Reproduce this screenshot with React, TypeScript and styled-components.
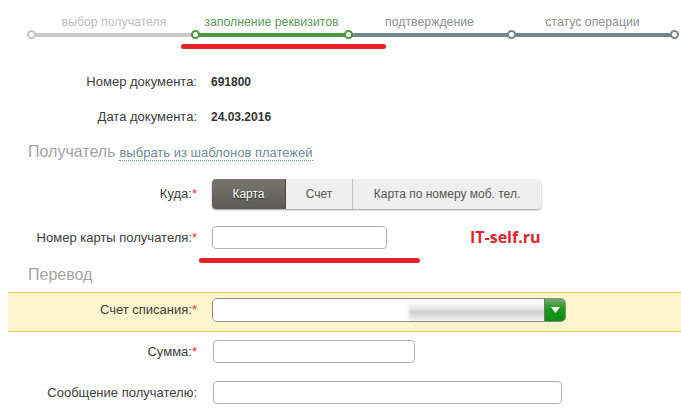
import React from "react";
import styled, { createGlobalStyle } from "styled-components";

const Global = createGlobalStyle`
  html, body { margin: 0; padding: 0; background: #fff; }
  body { font-family: "Liberation Sans", Arial, sans-serif; color: #333; overflow: hidden; }
`;

const Page = styled.div`
  position: relative;
  width: 681px;
  height: 410px;
  overflow: hidden;
`;

const Stepper = styled.div`
  display: flex;
  padding: 15px 0 0 27px;
  height: 56px;
  box-sizing: border-box;
`;

const Step = styled.div<{ $w: number; $labelColor: string; $line: string; $node: string }>`
  position: relative;
  width: ${p => p.$w}px;
  height: 41px;
  text-align: center;
  font-size: 12.3px;
  line-height: 14px;
  color: ${p => p.$labelColor};
  &::before {
    content: "";
    position: absolute;
    left: 4px;
    right: -4px;
    top: 18px;
    height: 4px;
    background: ${p => p.$line};
  }
  &::after {
    content: "";
    position: absolute;
    left: 0;
    top: 15px;
    width: 5px;
    height: 5px;
    border: 2px solid ${p => p.$node};
    border-radius: 50%;
    background: #fff;
  }
`;

const EndNode = styled.div`
  position: relative;
  width: 5px;
  height: 5px;
  margin-top: 15px;
  border: 2px solid #77858f;
  border-radius: 50%;
  background: #fff;
`;

const StepLabel = styled.div<{ $shift: number }>`
  position: relative;
  left: ${p => p.$shift}px;
`;

const Row = styled.div<{ $h: number; $mt?: number }>`
  display: flex;
  align-items: center;
  height: ${p => p.$h}px;
  margin-top: ${p => p.$mt ?? 0}px;
`;

const Label = styled.div`
  width: 197px;
  flex: none;
  text-align: right;
  font-size: 13px;
  color: #3c3c3c;
  white-space: nowrap;
`;

const Star = styled.span`
  color: #d33;
`;

const Value = styled.div`
  margin-left: 14px;
  font-size: 12px;
  font-weight: bold;
  color: #333;
`;

const SectionTitle = styled.div<{ $h: number; $pt: number }>`
  height: ${p => p.$h}px;
  padding: ${p => p.$pt}px 0 0 28px;
  box-sizing: border-box;
  display: flex;
  align-items: flex-start;
  gap: 4px;
  font-size: 16px;
  line-height: 18px;
  color: #a3a3a3;
  white-space: nowrap;
`;

const TemplateLink = styled.span`
  font-size: 13px;
  color: #6f8a96;
  border-bottom: 1px dotted #6f8a96;
  line-height: 14px;
  margin-top: 3px;
`;

const Segments = styled.div`
  margin-left: 15px;
  display: flex;
  height: 30px;
  width: 329px;
  border-radius: 4px;
  box-shadow: 0 1px 2px rgba(0, 0, 0, 0.4);
  overflow: hidden;
`;

const Segment = styled.div<{ $w: number; $active?: boolean }>`
  width: ${p => p.$w}px;
  flex: none;
  display: flex;
  align-items: center;
  justify-content: center;
  font-size: 12px;
  color: ${p => (p.$active ? "#fff" : "#555")};
  background: ${p => (p.$active ? "linear-gradient(#77766f, #5c5b55)" : "#efefef")};
  border-right: ${p => (p.$active ? "1px solid #4a4a44" : "1px solid #c4c4c4")};
  text-shadow: ${p => (p.$active ? "0 1px 1px #222" : "none")};
  box-sizing: border-box;
  &:last-child { border-right: none; }
`;

const TextInput = styled.div<{ $w: number; $ml?: number }>`
  width: ${p => p.$w}px;
  height: 23px;
  margin-left: ${p => p.$ml ?? 15}px;
  box-sizing: border-box;
  border: 1px solid #a9b4ba;
  border-radius: 4px;
  background: #fff;
`;

const Brand = styled.div`
  margin-left: 83px;
  font-family: "Open Sans", sans-serif;
  font-size: 16px;
  font-weight: bold;
  color: #d9262e;
`;

const Band = styled.div`
  margin-left: 8px;
  height: 40px;
  box-sizing: border-box;
  border-top: 1px solid #efd453;
  border-bottom: 1px solid #efd453;
  background: #fdf5cd;
  padding-top: 5px;
  display: flex;
  align-items: flex-start;
`;

const BandLabel = styled(Label)`
  width: 189px;
  line-height: 24px;
`;

const Select = styled.div`
  position: relative;
  margin-left: 15px;
  width: 354px;
  height: 24px;
  box-sizing: border-box;
  border: 1px solid #8a8a80;
  border-radius: 5px;
  overflow: hidden;
  display: flex;
  justify-content: flex-end;
  background: linear-gradient(#fff 0%, #f0f0f0 35%, #cfcfcf 60%, #f2f2f2 100%);
`;

const Redacted = styled.div`
  position: absolute;
  left: -4px;
  top: -4px;
  bottom: -4px;
  width: 200px;
  background: #fff;
  filter: blur(1.5px);
`;

const SelectArrow = styled.div`
  position: relative;
  width: 22px;
  margin: -1px -1px -1px 0;
  background: linear-gradient(#7fa878 0%, #1d9a1d 45%, #0a8a12 100%);
  display: flex;
  align-items: center;
  justify-content: center;
  border-left: 1px solid #777;
  box-sizing: border-box;
  svg { display: block; }
`;

const Annotation = styled.div<{ $x: number; $y: number; $w: number; $h: number }>`
  position: absolute;
  left: ${p => p.$x}px;
  top: ${p => p.$y}px;
  width: ${p => p.$w}px;
  height: ${p => p.$h}px;
  background: #e8202c;
  border-radius: 3px;
`;

export default function App() {
  return (
    <Page>
      <Global />
      <Stepper>
        <Step $w={164} $labelColor="#c0c0c0" $line="#c9c9c9" $node="#c4c4c4">
          <StepLabel $shift={5}>выбор получателя</StepLabel>
        </Step>
        <Step $w={153} $labelColor="#5a9a58" $line="#4a9a40" $node="#4a9a40">
          <StepLabel $shift={4}>заполнение реквизитов</StepLabel>
        </Step>
        <Step $w={163} $labelColor="#8a8f94" $line="#77858f" $node="#4a9a40">
          <StepLabel $shift={4}>подтверждение</StepLabel>
        </Step>
        <Step $w={163} $labelColor="#8a8f94" $line="#77858f" $node="#77858f">
          <StepLabel $shift={4}>статус операции</StepLabel>
        </Step>
        <EndNode />
      </Stepper>

      <Row $h={35} $mt={8}>
        <Label>Номер документа:</Label>
        <Value>691800</Value>
      </Row>
      <Row $h={35}>
        <Label>Дата документа:</Label>
        <Value>24.03.2016</Value>
      </Row>
      <SectionTitle $h={34} $pt={9}>
        Получатель <TemplateLink>выбрать из шаблонов платежей</TemplateLink>
      </SectionTitle>

      <Row $h={51}>
        <Label>Куда:<Star>*</Star></Label>
        <Segments>
          <Segment $w={74} $active>Карта</Segment>
          <Segment $w={67}>Счет</Segment>
          <Segment $w={188}>Карта по номеру моб. тел.</Segment>
        </Segments>
      </Row>
      <Row $h={36}>
        <Label>Номер карты получателя:<Star>*</Star></Label>
        <TextInput $w={175} />
        <Brand>IT-self.ru</Brand>
      </Row>
      <SectionTitle $h={37} $pt={11}>Перевод</SectionTitle>
      <Band>
        <BandLabel>Счет списания:<Star>*</Star></BandLabel>
        <Select>
          <Redacted />
          <SelectArrow>
            <svg width="9" height="6" viewBox="0 0 9 6">
              <path d="M0 0H9L4.5 6Z" fill="#fff" />
            </svg>
          </SelectArrow>
        </Select>
      </Band>
      <Row $h={39}>
        <Label>Сумма:<Star>*</Star></Label>
        <TextInput $w={202} $ml={16} />
      </Row>
      <Row $h={43}>
        <Label>Сообщение получателю:</Label>
        <TextInput $w={349} $ml={16} />
      </Row>

      <Annotation $x={181} $y={44} $w={205} $h={5} />
      <Annotation $x={199} $y={258} $w={221} $h={5} />
    </Page>
  );
}
